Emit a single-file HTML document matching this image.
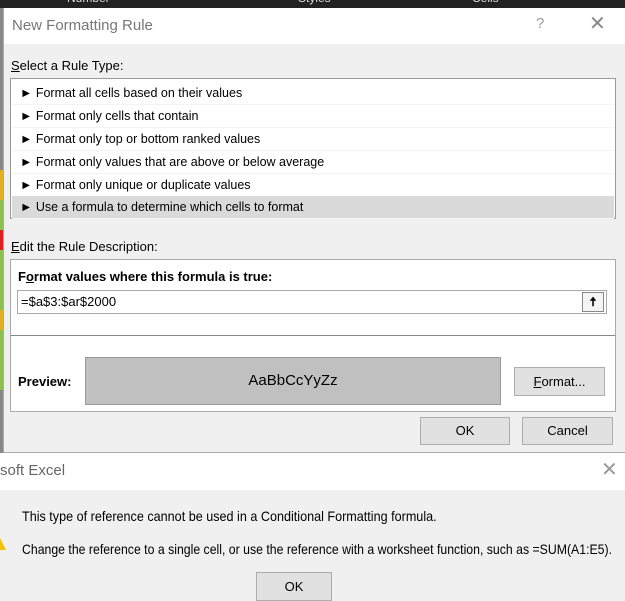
<!DOCTYPE html>
<html><head><style>
*{margin:0;padding:0;box-sizing:border-box}
body{width:625px;height:600px;overflow:hidden;background:#f0f0f0;font-family:"Liberation Sans",sans-serif;font-size:12.5px;color:#000;position:relative}
.a{position:absolute;white-space:nowrap}
.btn{position:absolute;background:#e1e1e1;border:1px solid #adadad;text-align:center;font-size:13px}
.it{position:absolute;left:1px;right:1px;height:23px;line-height:23px;padding-left:8px;border-bottom:1px solid #f3f3f3}
</style></head><body>
<div class="a" style="left:0;top:0;width:625px;height:8px;background:#222;color:#ddd;font-size:12px;line-height:0px;overflow:hidden">
<span class="a" style="left:67px;top:-2px">Number</span><span class="a" style="left:298px;top:-2px">Styles</span><span class="a" style="left:472px;top:-2px">Cells</span></div>
<div class="a" style="left:0;top:8px;width:3px;height:445px;background:#888"></div>
<div class="a" style="left:0;top:170px;width:3px;height:30px;background:#e0b020"></div>
<div class="a" style="left:0;top:200px;width:3px;height:30px;background:#8cc050"></div>
<div class="a" style="left:0;top:230px;width:3px;height:20px;background:#e02020"></div>
<div class="a" style="left:0;top:250px;width:3px;height:60px;background:#8cc050"></div>
<div class="a" style="left:0;top:310px;width:3px;height:20px;background:#e0b020"></div>
<div class="a" style="left:0;top:330px;width:3px;height:60px;background:#8cc050"></div>
<div class="a" style="left:3px;top:8px;width:622px;height:445px;background:#f0f0f0;border-left:1px solid #aaa;border-bottom:1px solid #aaa"></div>
<div class="a" style="left:4px;top:8px;width:621px;height:36px;background:#fff"></div>
<div class="a" style="left:12px;top:17px;font-size:15px;color:#777">New Formatting Rule</div>
<div class="a" style="left:536px;top:15px;font-size:15px;color:#999">?</div>
<div class="a" style="left:589px;top:11px;font-size:20px;color:#888">✕</div>
<div class="a" style="left:11px;top:58px;font-size:13px"><u>S</u>elect a Rule Type:</div>
<div class="a" style="left:10px;top:78px;width:606px;height:141px;background:#fff;border:1px solid #999">
<div class="it" style="top:3px">► Format all cells based on their values</div>
<div class="it" style="top:26px">► Format only cells that contain</div>
<div class="it" style="top:49px">► Format only top or bottom ranked values</div>
<div class="it" style="top:72px">► Format only values that are above or below average</div>
<div class="it" style="top:95px">► Format only unique or duplicate values</div>
<div class="it" style="top:117px;background:#dadada">► Use a formula to determine which cells to format</div>
</div>
<div class="a" style="left:11px;top:239px;font-size:13px"><u>E</u>dit the Rule Description:</div>
<div class="a" style="left:10px;top:259px;width:606px;height:153px;background:#fff;border:1px solid #aaa"></div>
<div class="a" style="left:18px;top:269px;font-weight:bold;font-size:13px">F<u>o</u>rmat values where this formula is true:</div>
<div class="a" style="left:17px;top:290px;width:590px;height:24px;border:1px solid #aaa;line-height:22px;padding-left:3px;font-size:13px">=$a$3:$ar$2000</div>
<div class="a" style="left:582px;top:292px;width:22px;height:20px;border:1px solid #888;background:#f4f4f4;text-align:center;font-weight:bold;line-height:18px">🠅</div>
<div class="a" style="left:11px;top:335px;width:604px;height:1px;background:#888"></div>
<div class="a" style="left:18px;top:374px;font-weight:bold;font-size:13px">Preview:</div>
<div class="a" style="left:85px;top:357px;width:416px;height:48px;background:#c0c0c0;border:1px solid #999;text-align:center;line-height:46px;font-size:15px">AaBbCcYyZz</div>
<div class="btn" style="left:514px;top:367px;width:91px;height:29px;line-height:27px"><u>F</u>ormat...</div>
<div class="btn" style="left:420px;top:417px;width:90px;height:28px;line-height:26px">OK</div>
<div class="btn" style="left:522px;top:417px;width:91px;height:28px;line-height:26px">Cancel</div>
<div class="a" style="left:0;top:453px;width:625px;height:37px;background:#fff"></div>
<div class="a" style="left:0;top:462px;font-size:15px;color:#666">soft Excel</div>
<div class="a" style="left:601px;top:457px;font-size:20px;color:#999">✕</div>
<div class="a" style="left:22px;top:508px;font-size:14px;transform:scaleX(0.9);transform-origin:0 0">This type of reference cannot be used in a Conditional Formatting formula.</div>
<div class="a" style="left:22px;top:541px;font-size:14px;transform:scaleX(0.877);transform-origin:0 0">Change the reference to a single cell, or use the reference with a worksheet function, such as =SUM(A1:E5).</div>
<div class="a" style="left:-6px;top:538px;width:0;height:0;border-left:6px solid transparent;border-right:6px solid transparent;border-bottom:12px solid #f2c200"></div>
<div class="btn" style="left:256px;top:572px;width:76px;height:29px;line-height:27px">OK</div>
</body></html>
